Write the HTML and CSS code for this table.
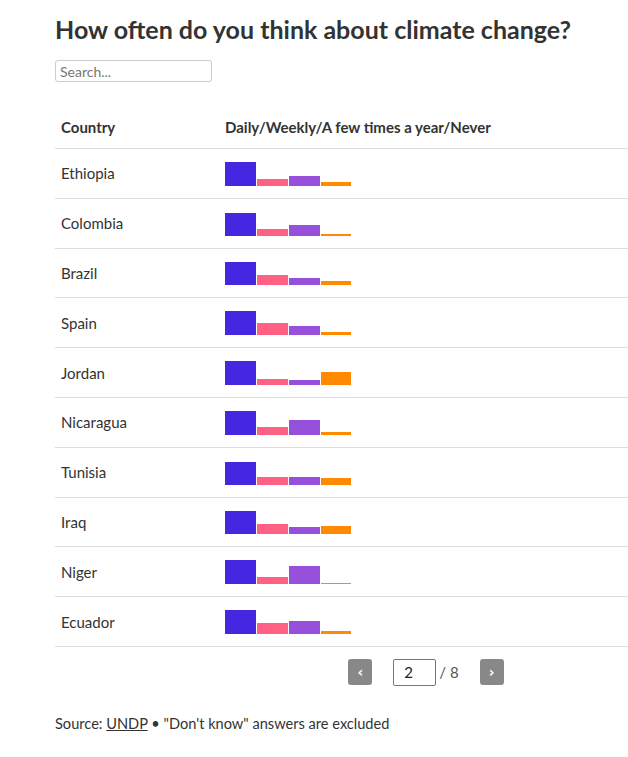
FILE: index.html
```html
<!DOCTYPE html>
<html>
<head>
<meta charset="utf-8">
<link rel="stylesheet" href="styles.css">
</head>
<body>
<div class="chart">
  <h1 class="title">How often do you think about climate change?</h1>
  <input class="search" type="text" placeholder="Search...">
  <div class="table">
    <div class="row head">
      <div class="cell country">Country</div>
      <div class="cell bars-col">Daily/Weekly/A few times a year/Never</div>
    </div>
    <div class="row"><div class="cell country">Ethiopia</div><div class="cell bars-col"><div class="bars"><span class="bar daily" style="height:24px"></span><span class="bar weekly" style="height:7px"></span><span class="bar few" style="height:10px"></span><span class="bar never" style="height:4px"></span></div></div></div>
    <div class="row"><div class="cell country">Colombia</div><div class="cell bars-col"><div class="bars"><span class="bar daily" style="height:23px"></span><span class="bar weekly" style="height:7px"></span><span class="bar few" style="height:11px"></span><span class="bar never" style="height:2px"></span></div></div></div>
    <div class="row"><div class="cell country">Brazil</div><div class="cell bars-col"><div class="bars"><span class="bar daily" style="height:23px"></span><span class="bar weekly" style="height:10px"></span><span class="bar few" style="height:7px"></span><span class="bar never" style="height:4px"></span></div></div></div>
    <div class="row"><div class="cell country">Spain</div><div class="cell bars-col"><div class="bars"><span class="bar daily" style="height:24px"></span><span class="bar weekly" style="height:12px"></span><span class="bar few" style="height:9px"></span><span class="bar never" style="height:3px"></span></div></div></div>
    <div class="row"><div class="cell country">Jordan</div><div class="cell bars-col"><div class="bars"><span class="bar daily" style="height:24px"></span><span class="bar weekly" style="height:6px"></span><span class="bar few" style="height:5px"></span><span class="bar never" style="height:13px"></span></div></div></div>
    <div class="row"><div class="cell country">Nicaragua</div><div class="cell bars-col"><div class="bars"><span class="bar daily" style="height:24px"></span><span class="bar weekly" style="height:8px"></span><span class="bar few" style="height:15px"></span><span class="bar never" style="height:3px"></span></div></div></div>
    <div class="row"><div class="cell country">Tunisia</div><div class="cell bars-col"><div class="bars"><span class="bar daily" style="height:23px"></span><span class="bar weekly" style="height:8px"></span><span class="bar few" style="height:8px"></span><span class="bar never" style="height:7px"></span></div></div></div>
    <div class="row"><div class="cell country">Iraq</div><div class="cell bars-col"><div class="bars"><span class="bar daily" style="height:23px"></span><span class="bar weekly" style="height:10px"></span><span class="bar few" style="height:7px"></span><span class="bar never" style="height:8px"></span></div></div></div>
    <div class="row"><div class="cell country">Niger</div><div class="cell bars-col"><div class="bars"><span class="bar daily" style="height:24px"></span><span class="bar weekly" style="height:7px"></span><span class="bar few" style="height:18px"></span><span class="bar never" style="height:1px"></span></div></div></div>
    <div class="row"><div class="cell country">Ecuador</div><div class="cell bars-col"><div class="bars"><span class="bar daily" style="height:24px"></span><span class="bar weekly" style="height:11px"></span><span class="bar few" style="height:13px"></span><span class="bar never" style="height:3px"></span></div></div></div>
  </div>
  <div class="pager">
    <button class="pg-btn" type="button">&lsaquo;</button>
    <div class="pg-info"><input class="pg-input" type="text" value="2"><span class="pg-total">/ 8</span></div>
    <button class="pg-btn" type="button">&rsaquo;</button>
  </div>
  <p class="source">Source: <a class="src-link" href="#">UNDP</a> • "Don't know" answers are excluded</p>
</div>
</body>
</html>
```

FILE: styles.css
```css
html, body {
  margin: 0;
  padding: 0;
  background: #fff;
}
body {
  font-family: Lato, "Noto Sans", sans-serif;
  color: #333;
}
.chart {
  padding: 0 0 0 55px;
}
.title {
  margin: 0;
  padding-top: 14px;
  font-size: 25px;
  line-height: 30px;
  font-weight: 700;
  color: #333;
}
.search {
  display: block;
  margin-top: 16px;
  width: 157px;
  height: 22px;
  box-sizing: border-box;
  border: 1px solid #ccc;
  border-radius: 3px;
  padding: 0 4px;
  font-family: inherit;
  font-size: 14px;
  color: #333;
}
.search::placeholder {
  color: #777;
}
.table {
  margin-top: 23px;
}
.row {
  display: grid;
  grid-template-columns: 170px 1fr;
  height: 49.8px;
  box-sizing: border-box;
  border-bottom: 1px solid #ddd;
  align-items: center;
}
.row.head {
  height: 44px;
  font-weight: 700;
}
.cell {
  font-size: 15px;
}
.country {
  padding-left: 6px;
}
.bars {
  display: flex;
  align-items: flex-end;
  gap: 1px;
  height: 24px;
  padding-top: 1px;
}
.bar {
  display: block;
  width: 31px;
}
.bar.never { width: 30px; }
.daily { background: #4527e1; }
.weekly { background: #ff6084; }
.few { background: #9650dc; }
.never { background: #ff8a00; }
.pager {
  display: flex;
  justify-content: center;
  align-items: center;
  gap: 21px;
  margin: 12px 0 0 171px;
  width: 400px;
}
.pg-btn {
  width: 24px;
  height: 26px;
  border: none;
  border-radius: 3px;
  background: #888;
  color: #fff;
  font-family: "DejaVu Sans", sans-serif;
  font-size: 14px;
  font-weight: 700;
  padding: 0;
  line-height: 26px;
}
.pg-info {
  display: flex;
  align-items: center;
  gap: 3px;
}
.pg-input {
  width: 43px;
  height: 27px;
  box-sizing: border-box;
  border: 1px solid #777;
  border-radius: 2px;
  padding: 0 10px;
  font-family: inherit;
  font-size: 15px;
  color: #222;
}
.pg-total {
  font-size: 15px;
  color: #555;
}
.source {
  margin: 29px 0 0;
  font-size: 14.6px;
  color: #333;
}
.src-link {
  color: #333;
  text-decoration: underline;
}
```
